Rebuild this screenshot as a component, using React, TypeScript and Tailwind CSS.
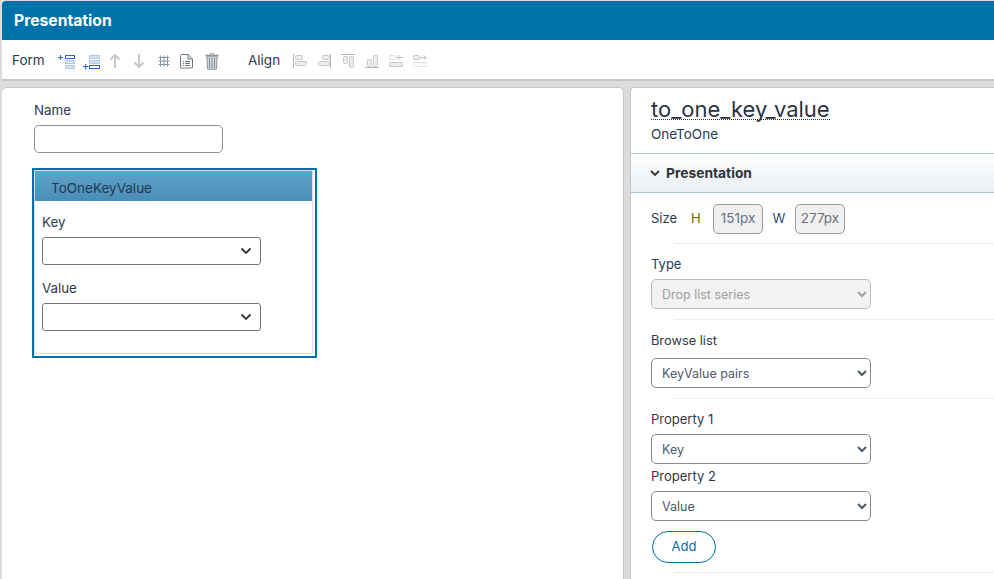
import React from "react";

const FONT = "font-['Inter','Noto_Sans',sans-serif]";

function Stack({ hi, plusBottom }: { hi: number; plusBottom?: boolean }) {
  const ys = [3.5, 8.5, 13.5];
  const rx = plusBottom ? 6.5 : 8.5;
  const rw = plusBottom ? 10 : 9;
  return (
    <svg width="20" height="18" viewBox="0 0 20 18" className="block">
      {ys.map((y, i) => (
        <rect key={i} x={rx} y={y} width={rw} height="3" fill={i === hi ? "#fff" : "#d3e2ef"} stroke={i === hi ? "#2f62c9" : "#b3cbe0"} strokeWidth="1" />
      ))}
      {plusBottom ? (
        <path d="M0 14.500h5.500M2.750 12v5.500" stroke="#2f62c9" strokeWidth="1.100" />
      ) : (
        <path d="M1 5.500h5M3.500 3v5" stroke="#2f62c9" strokeWidth="1.100" />
      )}
    </svg>
  );
}

function Arrow({ down }: { down?: boolean }) {
  return (
    <svg width="12" height="16" viewBox="0 0 12 16" className="block">
      <path d={down ? "M6 1v13M1.500 9.500L6 14l4.500-4.500" : "M6 15V2M1.500 6.500L6 2l4.500 4.500"} fill="none" stroke="#c8c8c8" strokeWidth="2" />
    </svg>
  );
}

function Grid() {
  return (
    <svg width="12" height="12" viewBox="0 0 12 12" className="block">
      <path d="M2.500 0.500v11M6 0.500v11M9.500 0.500v11M0.500 2.500h11M0.500 6h11M0.500 9.500h11" stroke="#8a96a2" strokeWidth="1" fill="none" />
    </svg>
  );
}

function Doc() {
  return (
    <svg width="13" height="15" viewBox="0 0 13 15" className="block">
      <path d="M0.500 1.500a1 1 0 0 1 1-1h6.500l4.500 4.500v8a1 1 0 0 1-1 1h-10a1 1 0 0 1-1-1z M8 .5v4.500h4.500" fill="#fff" stroke="#6d7680" strokeWidth="1" />
      <path d="M3 7.500h1M5 7.500h5M3 9.500h1M5 9.500h5M3 11.500h1M5 11.500h5" stroke="#6d7680" strokeWidth="1" />
    </svg>
  );
}

function Trash() {
  return (
    <svg width="14" height="17" viewBox="0 0 14 17" className="block">
      <path d="M0.500 2.500h13" stroke="#8e959b" strokeWidth="1.400" />
      <path d="M5 2V.8h4V2" fill="none" stroke="#9aa0a5" strokeWidth="1" />
      <path d="M1.800 3.200h10.400l-.8 13H2.600z" fill="#d9dcdf" stroke="#8e959b" strokeWidth="1" />
      <path d="M4.500 4.500v10.500M7 4.500v10.500M9.500 4.500v10.500" stroke="#878e94" strokeWidth="1.100" />
    </svg>
  );
}

const bar = { fill: "#ececec", stroke: "#c8c8c8" };

function AlignIcon({ kind }: { kind: number }) {
  const s = (x: number, y: number, w: number, h: number, dashed?: boolean) => (
    <rect x={x + 0.5} y={y + 0.5} width={w} height={h} rx="1" fill={dashed ? "#fafafa" : bar.fill} stroke={bar.stroke} strokeDasharray={dashed ? "1 1" : undefined} />
  );
  return (
    <svg width="14" height="14" viewBox="0 0 14 14" className="block">
      {kind === 0 && (<>
        <path d="M.5 0v14" stroke="#b4b4b4" />{s(2, 1, 7, 4)}{s(2, 7, 11, 4)}
      </>)}
      {kind === 1 && (<>
        <path d="M13.500 0v14" stroke="#b4b4b4" />{s(5, 1, 7, 4)}{s(1, 7, 11, 4)}
      </>)}
      {kind === 2 && (<>
        <path d="M0 .5h14" stroke="#b4b4b4" />{s(2, 2, 4, 7)}{s(8, 2, 4, 11)}
      </>)}
      {kind === 3 && (<>
        <path d="M0 13.500h14" stroke="#b4b4b4" />{s(2, 5, 4, 7)}{s(8, 1, 4, 11)}
      </>)}
      {kind === 4 && (<>
        {s(0, 1, 6, 4, true)}<path d="M8 3.500h6M10.500 1l-2.500 2.500 2.500 2.500" stroke="#c0c0c0" fill="none" />{s(0, 8, 13, 4)}
      </>)}
      {kind === 5 && (<>
        {s(0, 1, 6, 4)}<path d="M7 3.500h6M10.500 1l2.500 2.500-2.500 2.500" stroke="#c0c0c0" fill="none" />{s(0, 8, 13, 4, true)}
      </>)}
    </svg>
  );
}

function FieldSelect({ className = "" }: { className?: string }) {
  return (
    <div className={`flex items-center justify-end w-[219px] h-7 bg-white border border-[#767676] rounded-[3px] pr-[8px] ${className}`}>
      <svg width="12" height="8" viewBox="0 0 12 8" className="block">
        <path d="M1.500 1.500L6 6l4.500-4.500" fill="none" stroke="#333" strokeWidth="1.800" />
      </svg>
    </div>
  );
}

function PropSelect({ value, disabled }: { value: string; disabled?: boolean }) {
  return (
    <select
      disabled={disabled}
      defaultValue={value}
      className={`block w-[220px] h-[30px] rounded-[5px] border pl-[6px] text-[12.500px] ${disabled ? "bg-[#f2f2f2] border-[#bbb] text-[#a0a0a0] opacity-100" : "bg-white border-[#8a8a8a] text-[#50596a]"}`}
    >
      <option>{value}</option>
    </select>
  );
}

function Rule() {
  return <div className="h-px bg-[#ececec] ml-[43px]" />;
}

function Px({ v }: { v: string }) {
  return (
    <div className="flex items-center justify-center w-[50px] h-[30px] bg-[#f0f0f0] border border-[#999] rounded-[5px] text-[#68727e] text-[13.500px]">
      {v}
    </div>
  );
}

export default function App() {
  return (
    <div className={`w-[994px] h-[579px] overflow-hidden bg-[#dcdcdc] flex flex-col pl-[2px] pt-px text-[#2c3a4c] ${FONT}`}>
      <div className="h-[80px] shrink-0 bg-white border-b-2 border-[#c6c6c6] rounded-tl-[4px] overflow-hidden">
        <div className="h-[39px] bg-[#0072aa] flex items-center pl-[12px] text-white font-bold text-[15.700px]">Presentation</div>
        <div className="h-[39px] flex items-center pl-[10px] pt-[3px]">
          <span className="text-[13.500px] w-[45px] pb-[2px]">Form</span>
          <div className="flex items-center">
            <div className="w-[26px]"><Stack hi={0} /></div>
            <div className="w-[26px]"><Stack hi={2} plusBottom /></div>
            <div className="w-[24px]"><Arrow /></div>
            <div className="w-[25px]"><Arrow down /></div>
            <div className="w-[22px]"><Grid /></div>
            <div className="w-[25px]"><Doc /></div>
            <div className="w-[43px]"><Trash /></div>
          </div>
          <span className="text-[13.500px] w-[45px] pb-[2px]">Align</span>
          <div className="flex items-center gap-[10px]">
            {[0, 1, 2, 3, 4, 5].map((k) => <AlignIcon key={k} kind={k} />)}
          </div>
        </div>
      </div>
      <div className="flex flex-1 gap-[6px] mt-[6px] min-h-0">
        <div className="w-[622px] shrink-0 bg-white border-t border-r border-[#c6c6c6] rounded-t-[5px] pl-[30px] pt-[13px]">
          <div className="ml-[2px] text-[13.300px] leading-[18px]">Name</div>
          <div className="ml-[2px] mt-[6px] w-[189px] h-[28px] border border-[#8f8f8f] rounded-[5px] bg-white" />
          <div className="mt-[15px] w-[285px] h-[190px] border-2 border-[#0072aa] pr-[2px] pb-[2px]">
            <div className="h-full border border-[#dedede]">
              <div className="h-[30px] bg-gradient-to-b from-[#5fa3ca] to-[#4a8db6] flex items-center pl-4 pt-[4px] text-[13.500px] text-[#22384f]">ToOneKeyValue</div>
              <div className="pl-[7px]">
                <div className="text-[13.300px] leading-[18px] mt-[12px]">Key</div>
                <FieldSelect className="mt-[6px]" />
                <div className="text-[13.300px] leading-[18px] mt-[14px]">Value</div>
                <FieldSelect className="mt-[6px]" />
              </div>
            </div>
          </div>
        </div>
        <div className="flex-1 bg-white border-t border-l border-[#c6c6c6] rounded-tl-[4px] min-w-0">
          <div className="pl-5 h-[65px]">
            <div className="text-[22px] leading-[20px] pt-[11px] box-content inline-block border-b border-dotted border-[#333] text-[#2b3340]">to_one_key_value</div>
            <div className="text-[13.500px] leading-[18px] mt-[2px]">OneToOne</div>
          </div>
          <div className="h-[40px] border-y border-[#afc8d6] bg-gradient-to-b from-white to-[#eaeff3] flex items-center pl-[19px] pt-[1px] font-bold text-[13.800px] gap-[6px] text-[#2b3340]">
            <svg width="10" height="7" viewBox="0 0 10 7" className="block">
              <path d="M1 1l4 4 4-4" fill="none" stroke="#333" strokeWidth="1.800" />
            </svg>
            Presentation
          </div>
          <div className="pl-5">
            <div className="flex items-center h-[50px] pt-[1px] text-[13px]">
              <span className="w-[40px]">Size</span>
              <span className="w-[22px] text-[#7a5a00]">H</span>
              <Px v="151px" />
              <span className="w-[32px] text-center text-[#2f4a78]">W</span>
              <Px v="277px" />
            </div>
          </div>
          <Rule />
          <div className="pl-5 pt-[11px] pb-[10px]">
            <div className="text-[13px] leading-[18px] mb-[6px]">Type</div>
            <PropSelect value="Drop list series" disabled />
          </div>
          <Rule />
          <div className="pl-5 pt-[11px] pb-[10px]">
            <div className="text-[12.800px] leading-[20px] mb-[7px]">Browse list</div>
            <PropSelect value="KeyValue pairs" />
          </div>
          <Rule />
          <div className="pl-5 pt-[11px]">
            <div className="text-[13px] leading-[18px] mb-[6px]">Property 1</div>
            <PropSelect value="Key" />
            <div className="text-[13px] leading-[18px] mt-[3px] mb-[6px]">Property 2</div>
            <PropSelect value="Value" />
            <button className="mt-[10px] ml-px w-[64px] h-[32px] rounded-full border border-[#0072aa] text-[#0072aa] text-[13px] bg-white">Add</button>
          </div>
          <div className="mt-[9px]"><Rule /></div>
        </div>
      </div>
    </div>
  );
}
